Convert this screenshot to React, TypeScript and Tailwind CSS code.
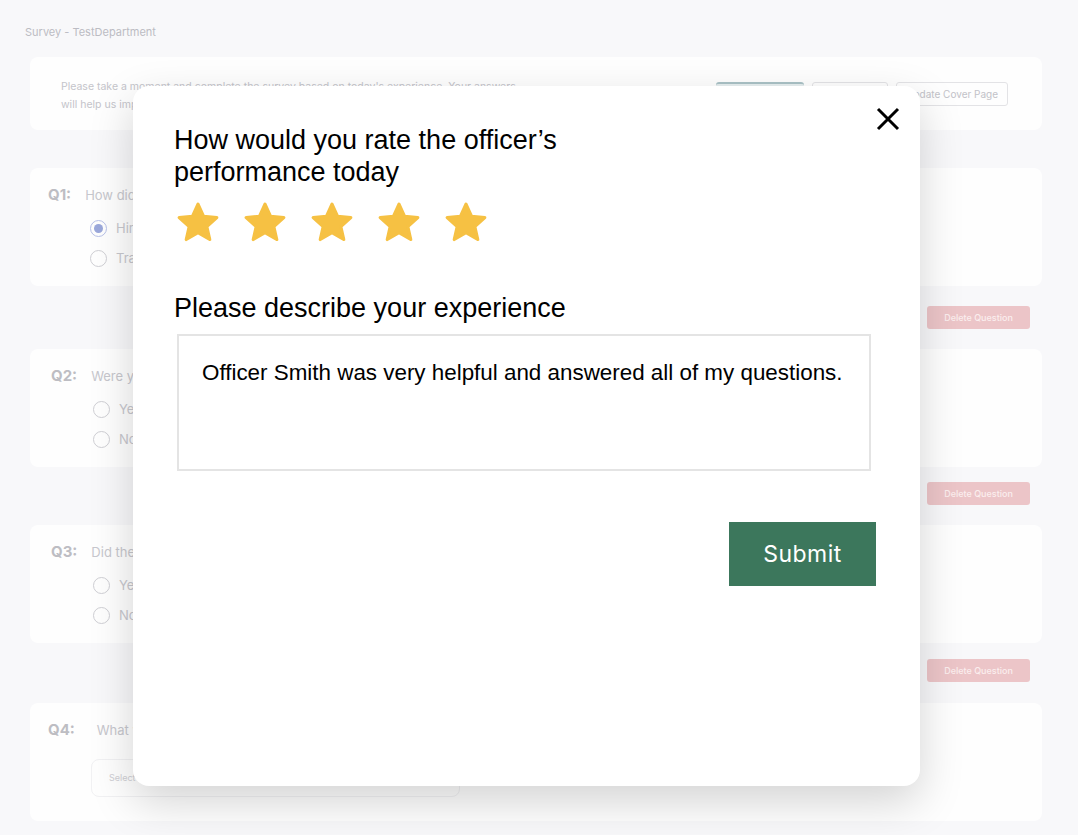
import React from "react";

const bgFont = { fontFamily: "Inter, 'Open Sans', sans-serif" };
const modalFont = { fontFamily: "'Liberation Sans', Arial, sans-serif" };

function Radio({ checked = false }: { checked?: boolean }) {
  return <span className={`flex h-[17px] w-[17px] items-center justify-center rounded-full border ${checked ? "border-[#b8c1e8]" : "border-[#cfcfd4]"}`}>
    {checked ? <span className="h-[9px] w-[9px] rounded-full bg-[#9ba8db]" /> : null}
  </span>;
}

function QuestionCard({ no, text, options, select, labelOffset = "pl-[18px]", gap = "gap-[14px]" }: { no: string; text: string; options?: { label: string; checked?: boolean }[]; select?: boolean; labelOffset?: string; gap?: string }) {
  return <section className={`h-[118px] rounded-lg bg-[#fefefe] pt-[18px] ${labelOffset}`}>
    <div className={`flex h-[18px] items-center ${gap}`}>
      <span className="text-[15px] font-bold leading-[18px] text-[#bdbdc3]">{no}</span>
      <span className="text-[13px] leading-[18px] text-[#c7c7cd]">{text}</span>
    </div>
    {options ? <div className="mt-[16px] flex flex-col gap-[13px] pl-[42px]">
      {options.map((o) => <label key={o.label} className="flex h-[17px] items-center gap-[9px] text-[13px] leading-[17px] text-[#c7c7cd]">
        <Radio checked={o.checked} />
        {o.label}
      </label>)}
    </div> : null}
    {select ? <div className="ml-[43px] mt-[20px] flex h-[38px] w-[369px] items-center rounded-lg border border-[#f1f1f3] pl-[17px] text-[9px] text-[#cfcfd4]">Select an option</div> : null}
  </section>;
}

function DeleteRow({ top, bottom }: { top: string; bottom: string }) {
  return <div className={`flex justify-end pr-[12px] ${top} ${bottom}`}>
    <button className="h-[23px] w-[103px] rounded-[3px] bg-[#ecc5c8] text-[9px] font-medium text-[#fbeeee]">Delete Question</button>
  </div>;
}

function Star() {
  return <svg width="48" height="48" viewBox="0 0 24 24" fill="#f6c143" stroke="#f6c143" strokeWidth="1.6" strokeLinejoin="round">
    <path d="M12 2.6l2.78 6.1 6.62.62-5 4.42 1.47 6.5L12 16.85 6.13 20.24l1.47-6.5-5-4.42 6.62-.62z" />
  </svg>;
}

export default function App() {
  return <div className="relative h-[835px] w-[1078px] overflow-hidden bg-[#f8f8fa]" style={bgFont}>
    {/* faded survey page behind the dialog */}
    <div className="pl-[25px] pt-[26px] text-[11px] leading-[12px] text-[#bcbcc3]">Survey - TestDepartment</div>
    <div className="pl-[30px] pr-[36px]">
      <section className="mt-[19px] flex h-[73px] items-start justify-between rounded-lg bg-[#fefefe] pl-[31px] pr-[34px] pt-[21px]">
        <p className="w-[560px] text-[10.5px] leading-[18px] text-[#c4c4ca]">Please take a moment and complete the survey based on today's experience. Your answers<br />will help us improve the service we provide to the community.</p>
        <div className="flex gap-[8px] pt-[4px]">
          <button className="h-[24px] w-[88px] rounded-[3px] border-t-2 border-[#aac2c6] bg-[#e7eff0]" />
          <button className="h-[24px] w-[76px] rounded-[3px] border border-[#e3e3e6]" />
          <button className="h-[24px] w-[112px] rounded-[3px] border border-[#e3e3e6] text-[10px] text-[#c2c2c8]">Update Cover Page</button>
        </div>
      </section>

      <div className="mt-[38px]">
        <QuestionCard no="Q1:" text="How did you contact us?" options={[{ label: "Hired help", checked: true }, { label: "Traffic stop" }]} />
      </div>
      <DeleteRow top="mt-[20px]" bottom="mb-[20px]" />
      <QuestionCard no="Q2:" text="Were you helped?" labelOffset="pl-[21px]" options={[{ label: "Yes" }, { label: "No" }]} />
      <DeleteRow top="mt-[15px]" bottom="mb-[20px]" />
      <QuestionCard no="Q3:" text="Did the officer explain the next steps?" labelOffset="pl-[21px]" options={[{ label: "Yes" }, { label: "No" }]} />
      <DeleteRow top="mt-[16px]" bottom="mb-[21px]" />
      <QuestionCard no="Q4:" text="What was the reason for your visit?" gap="gap-[22px]" select />
    </div>

    {/* dialog */}
    <div className="absolute left-[133px] top-[86px] h-[700px] w-[787px] rounded-2xl bg-white shadow-[0_16px_44px_rgba(0,0,0,0.17)]" style={modalFont}>
      <button aria-label="Close" className="absolute right-[20px] top-[21px] text-black">
        <svg width="24" height="24" viewBox="0 0 24 24" fill="none" stroke="currentColor" strokeWidth="3">
          <path d="M2 2l20 20M22 2L2 22" />
        </svg>
      </button>
      <div className="pl-[41px] pt-[38px]">
        <h1 className="w-[420px] text-[27px] leading-[32px] text-black">How would you rate the officer’s performance today</h1>
        <div className="mt-[11px] flex gap-[19px]">
          <Star /><Star /><Star /><Star /><Star />
        </div>
        <h2 className="mt-[45px] text-[27px] leading-[32px] text-black">Please describe your experience</h2>
        <div className="ml-[3px] mt-[10px] h-[137px] w-[694px] border-2 border-[#e4e4e4] pl-[23px] pt-[24px] text-[22.4px] leading-[26px] text-black">Officer Smith was very helpful and answered all of my questions.</div>
        <div className="mt-[51px] flex w-[702px] justify-end">
          <button className="h-[64px] w-[147px] bg-[#3c775c] text-[23px] tracking-[0.5px] text-white" style={{ fontFamily: "Inter, sans-serif" }}>Submit</button>
        </div>
      </div>
    </div>
  </div>;
}
